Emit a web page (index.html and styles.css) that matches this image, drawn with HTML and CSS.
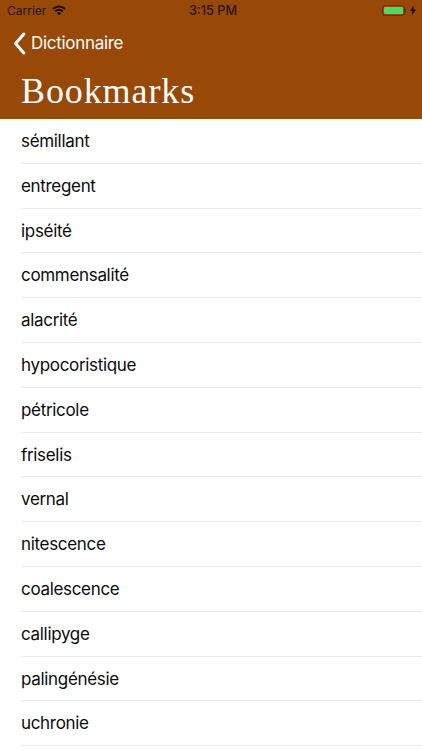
FILE: index.html
```html
<!DOCTYPE html>
<html lang="fr">
<head>
<meta charset="utf-8">
<title>Bookmarks</title>
<link rel="stylesheet" href="styles.css">
</head>
<body>
<header class="header">
  <div class="status">
    <div class="status-left">
      <span>Carrier</span>
      <svg class="wifi" viewBox="0 0 16 12" width="14" height="11"><path d="M8 11.5 5.6 8.9a3.4 3.4 0 0 1 4.8 0zM4.4 7.7 3 6.2a7 7 0 0 1 10 0l-1.4 1.5a5 5 0 0 0-7.2 0zM1.8 5 .3 3.5a10.8 10.8 0 0 1 15.4 0L14.2 5a8.8 8.8 0 0 0-12.4 0z" fill="#111"/></svg>
    </div>
    <span class="time">3:15 PM</span>
    <div class="status-right">
      <span class="battery"><span class="battery-fill"></span></span>
      <span class="battery-tip"></span>
      <svg class="bolt" viewBox="0 0 6 10" width="6" height="11"><path d="M3.6 0 0 5.6h2.3L1.8 10 6 3.9H3.4z" fill="#111"/></svg>
    </div>
  </div>
  <div class="nav">
    <svg class="chevron" viewBox="0 0 13 23" width="13" height="23"><path d="M10.8 2 2.6 11.5l8.2 9.5" fill="none" stroke="#fff" stroke-width="3" stroke-linecap="round" stroke-linejoin="round"/></svg>
    <span>Dictionnaire</span>
  </div>
  <h1 class="title">Bookmarks</h1>
</header>
<ul class="list">
  <li>sémillant</li>
  <li>entregent</li>
  <li>ipséité</li>
  <li>commensalité</li>
  <li>alacrité</li>
  <li>hypocoristique</li>
  <li>pétricole</li>
  <li>friselis</li>
  <li>vernal</li>
  <li>nitescence</li>
  <li>coalescence</li>
  <li>callipyge</li>
  <li>palingénésie</li>
  <li>uchronie</li>
</ul>
</body>
</html>
```
FILE: styles.css
```css
* { box-sizing: border-box; }
html, body { margin: 0; padding: 0; height: 100%; overflow: hidden; background: #fff; }
body { font-family: Inter, "Liberation Sans", sans-serif; color: #0b0b0b; }
.header { height: 119px; background: #984807; display: flex; flex-direction: column; }
.status { height: 21px; padding: 0 6px 0 7px; display: flex; align-items: center; justify-content: space-between; font-size: 12px; color: #2a1606; }
.status-left { display: flex; align-items: center; gap: 6px; width: 150px; }
.time { font-size: 12.7px; font-weight: 500; margin-left: 3px; }
.status-right { display: flex; align-items: center; justify-content: flex-end; width: 150px; }
.battery { width: 23px; height: 11px; border: 1px solid #5f3208; border-radius: 3px; padding: 1px; display: flex; }
.battery-fill { flex: 1; background: #4cd964; border-radius: 1px; }
.battery-tip { width: 1px; height: 4px; background: #5f3208; margin-right: 4px; }
.nav { height: 44px; padding-left: 13px; display: flex; align-items: center; gap: 5px; color: #fff; font-size: 17px; letter-spacing: -0.3px; }
.title { margin: 0; padding-left: 21px; font-family: "Liberation Serif", serif; font-weight: 400; font-size: 36px; letter-spacing: 0.9px; line-height: 52px; color: #fff; }
.list { margin: 0; padding: 0 0 0 21px; list-style: none; }
.list li { height: 44.8px; line-height: 44px; font-size: 17px; letter-spacing: -0.32px; border-bottom: 1px solid #ececec; }
```
